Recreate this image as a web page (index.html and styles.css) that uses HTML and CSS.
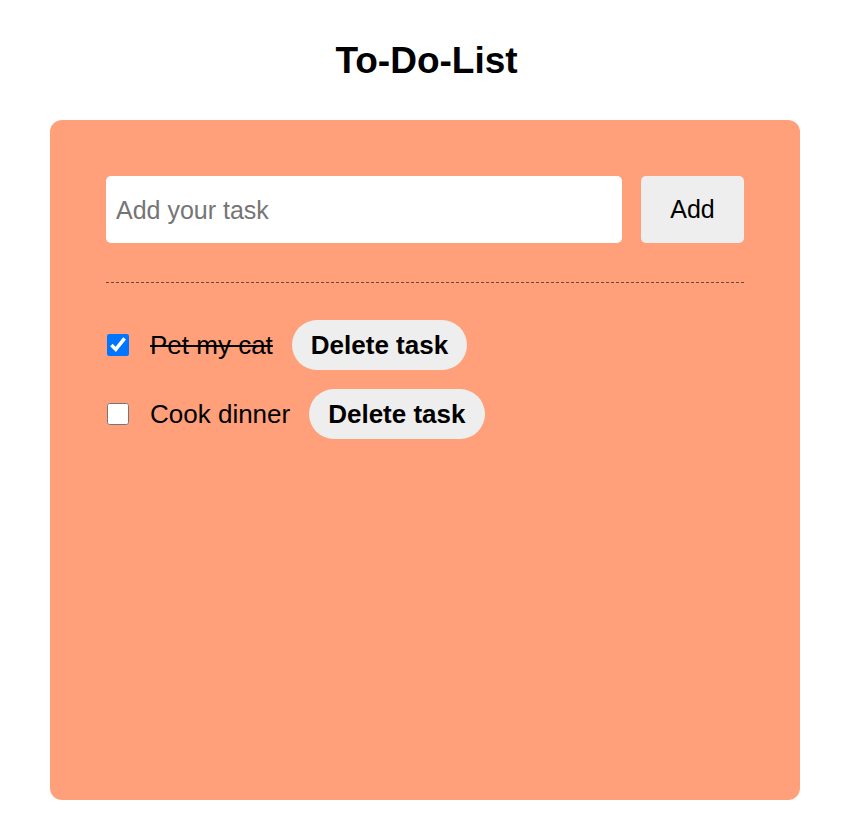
FILE: index.html
```html
<!DOCTYPE html>
<html lang="en">
<head>
<meta charset="utf-8">
<title>To-Do-List</title>
<link rel="stylesheet" href="styles.css">
</head>
<body>
  <header class="header">
    <h1 class="title">To-Do-List</h1>
  </header>
  <main class="card">
    <form class="add-row">
      <input class="task-input" type="text" placeholder="Add your task">
      <button class="add-btn" type="button">Add</button>
    </form>
    <hr class="divider">
    <ul class="tasks">
      <li class="task">
        <input class="task-check" type="checkbox" checked>
        <span class="task-text done">Pet my cat</span>
        <button class="delete-btn" type="button">Delete task</button>
      </li>
      <li class="task">
        <input class="task-check" type="checkbox">
        <span class="task-text">Cook dinner</span>
        <button class="delete-btn" type="button">Delete task</button>
      </li>
    </ul>
  </main>
</body>
</html>
```

FILE: styles.css
```css
html, body {
  margin: 0;
  padding: 0;
  background: #ffffff;
  font-family: "Liberation Sans", Arial, sans-serif;
  color: #000;
}

.header {
  height: 120px;
  display: flex;
  align-items: center;
  justify-content: center;
}

.title {
  margin: 0;
  font-size: 37px;
  font-weight: bold;
  line-height: 1;
}

.card {
  box-sizing: border-box;
  width: 750px;
  height: 680px;
  margin-left: 50px;
  padding: 56px;
  background: #ffa07a;
  border-radius: 12px;
}

.add-row {
  display: flex;
  gap: 19px;
  margin: 0;
}

.task-input {
  flex: 1;
  height: 67px;
  box-sizing: border-box;
  border: none;
  border-radius: 5px;
  padding: 2px 10px 0;
  font-family: "Liberation Sans", Arial, sans-serif;
  font-size: 25px;
  background: #fff;
  outline: none;
}

.task-input::placeholder {
  color: #757575;
}

.add-btn {
  width: 103px;
  height: 67px;
  border: none;
  border-radius: 5px;
  background: #eeeeee;
  font-family: "Liberation Sans", Arial, sans-serif;
  font-size: 25px;
  color: #000;
  padding: 0;
}

.divider {
  border: none;
  border-top: 1px dashed #6b4a3c;
  margin: 39px 0 37px;
  height: 0;
}

.tasks {
  list-style: none;
  margin: 0;
  padding: 0;
  display: flex;
  flex-direction: column;
  gap: 19px;
}

.task {
  display: flex;
  align-items: center;
}

.task-check {
  width: 22px;
  height: 22px;
  margin: 0 21px 0 1px;
}

.task-text {
  font-size: 26px;
  margin-right: 19px;
}

.task-text.done {
  text-decoration: line-through;
}

.delete-btn {
  border: none;
  border-radius: 25px;
  background: #eeeeee;
  font-family: "Liberation Sans", Arial, sans-serif;
  font-size: 26px;
  font-weight: bold;
  color: #000;
  padding: 10px 19px;
  line-height: 30px;
}
```
